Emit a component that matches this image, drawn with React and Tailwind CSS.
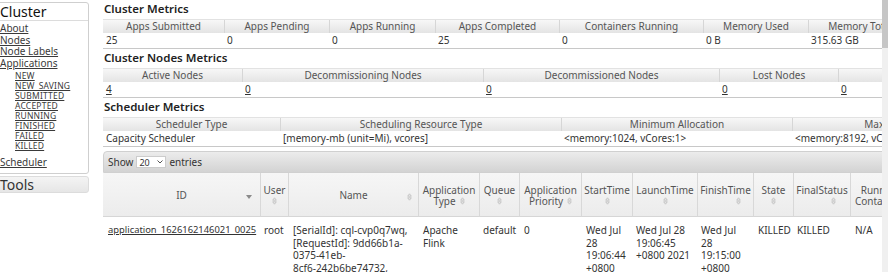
import React from 'react';

const hdr = 'bg-gradient-to-b from-[#f7f7f7] to-[#e4e4e4] text-[#555] text-center border-l border-[#d6d6d6] first:border-l-0 h-[13px] leading-[13px] whitespace-nowrap overflow-hidden';
const cell = 'h-[15px] leading-[14px] pl-[3px] text-[#333] whitespace-nowrap overflow-hidden';

function SortIcon({ className = '' }) {
  return (
    <svg width="5" height="8" viewBox="0 0 5 8" className={className}>
      <path d="M2.5 0.8 L4.3 3.2 H0.7 Z" fill="none" stroke="#b5b5b5" strokeWidth="0.7" />
      <path d="M2.5 7.2 L4.3 4.8 H0.7 Z" fill="none" stroke="#b5b5b5" strokeWidth="0.7" />
    </svg>
  );
}

function Metrics({ title, cols, heads, values, links }) {
  return (
    <div>
      <h3 className="h-[19px] leading-[17px] text-[11.5px] font-semibold text-[#222] pl-[1px]">{title}</h3>
      <div className={`grid ${cols} border-t border-[#e2e2e2]`}>
        {heads.map((h) => (
          <div key={h} className={hdr}>{h}</div>
        ))}
      </div>
      <div className={`grid ${cols} border-b border-[#c8c8c8]`}>
        {values.map((v, i) => (
          <div key={i} className={cell}>
            {links ? <span className="underline">{v}</span> : v}
          </div>
        ))}
      </div>
    </div>
  );
}

const sideLinks = ['About', 'Nodes', 'Node Labels', 'Applications'];
const appStates = ['NEW', 'NEW_SAVING', 'SUBMITTED', 'ACCEPTED', 'RUNNING', 'FINISHED', 'FAILED', 'KILLED'];

// l1/l2: header lines; icon: where the sort icon sits
const appHeads = [
  { l1: 'ID', icon: 'desc' },
  { l1: 'User', l2: '' },
  { l1: 'Name', icon: 'right' },
  { l1: 'Application', l2: 'Type', icon: 'after' },
  { l1: 'Queue', l2: '' },
  { l1: 'Application', l2: 'Priority', icon: 'after' },
  { l1: 'StartTime', l2: '' },
  { l1: 'LaunchTime', l2: '' },
  { l1: 'FinishTime', l2: '', shift: 'ml-[26px]' },
  { l1: 'State', l2: '' },
  { l1: 'FinalStatus', l2: '', shift: 'ml-[22px]' },
  { l1: 'Running', l2: 'Containers', icon: 'none' },
];

const td = 'pt-[7px] leading-[12.7px] text-[#333] whitespace-nowrap overflow-hidden';

export default function App() {
  return (
    <div className="w-[888px] h-[272px] overflow-hidden flex bg-white font-['Noto_Sans',sans-serif] text-[10px]">
      <div className="flex-1 flex overflow-hidden">
        {/* Sidebar */}
        <div className="w-[93px] shrink-0 -ml-[4px] pt-[2px]">
          <div className="border border-[#cfcfcf] rounded-[3px] h-[172px]">
            <div className="h-[18px] leading-[17px] border-b border-[#dcdcdc] text-[14px] text-[#111] pl-[3px]">Cluster</div>
            <ul className="pl-[3px] pt-[2px] text-[#3a3a3a] leading-[11.5px] text-[10px]">
              {sideLinks.map((l) => (
                <li key={l}><span className="underline">{l}</span></li>
              ))}
            </ul>
            <ul className="pl-[18px] mt-[2px] leading-[10px] text-[8.5px] tracking-[0.2px] text-[#3a3a3a]">
              {appStates.map((s) => (
                <li key={s} className="h-[10px]"><span className="underline">{s}</span></li>
              ))}
            </ul>
            <div className="pl-[3px] mt-[6px] leading-[11.5px] text-[#3a3a3a]"><span className="underline">Scheduler</span></div>
          </div>
          <div className="mt-[2px] h-[17px] leading-[16px] border border-[#dcdcdc] rounded-[3px] bg-gradient-to-b from-[#f4f4f4] to-[#e6e6e6] text-[14px] text-[#333] pl-[3px]">Tools</div>
        </div>

        {/* Main */}
        <div className="ml-[14px] w-[1000px] shrink-0">
          <Metrics
            title="Cluster Metrics"
            cols="grid-cols-[121px_105px_106px_124px_144px_105px_104px_120px]"
            heads={['Apps Submitted', 'Apps Pending', 'Apps Running', 'Apps Completed', 'Containers Running', 'Memory Used', 'Memory Total', 'Memory Reserved']}
            values={['25', '0', '0', '25', '0', '0 B', '315.63 GB', '0 B']}
          />
          <Metrics
            title="Cluster Nodes Metrics"
            cols="grid-cols-[139px_241px_236px_119px_200px]"
            heads={['Active Nodes', 'Decommissioning Nodes', 'Decommissioned Nodes', 'Lost Nodes', 'Unhealthy Nodes']}
            values={['4', '0', '0', '0', '0']}
            links
          />
          <Metrics
            title="Scheduler Metrics"
            cols="grid-cols-[177px_281px_231px_240px]"
            heads={['Scheduler Type', 'Scheduling Resource Type', 'Minimum Allocation', 'Maximum Allocation']}
            values={['Capacity Scheduler', '[memory-mb (unit=Mi), vcores]', '<memory:1024, vCores:1>', '<memory:8192, vCores:4>']}
          />

          {/* Datatable toolbar */}
          <div className="mt-[4px] h-[22px] rounded-tl-[4px] bg-gradient-to-b from-[#ececec] to-[#d3d3d3] border border-[#d0d0d0] flex items-center pl-[4px] gap-[3px] text-[#333]">
            <span>Show</span>
            <span className="w-[30px] h-[12px] bg-white border border-[#ccc] flex items-center justify-between px-[2px] text-[9px] leading-none">
              20
              <svg width="6" height="4" viewBox="0 0 6 4"><path d="M0.5 0.5 L3 3 L5.5 0.5" fill="none" stroke="#555" strokeWidth="1" /></svg>
            </span>
            <span>entries</span>
          </div>

          {/* Applications table */}
          <div className="grid grid-cols-[157px_28px_130px_61px_40px_62px_51px_65px_56px_40px_57px_60px_100px]">
            {appHeads.map((h, i) => (
              <div
                key={i}
                className={`h-[44px] pt-[2px] bg-gradient-to-b from-[#f6f6f6] to-[#ececec] border-b border-[#d6d6d6] ${i > 0 ? 'border-l border-l-[#d8d8d8]' : ''} text-[#555] leading-[11px] relative flex flex-col items-center justify-center text-center overflow-hidden whitespace-nowrap`}
              >
                <span>{h.l1}</span>
                {h.l2 !== undefined && (
                  <span className="flex items-center gap-[4px] h-[11px]">
                    {h.l2 && <span>{h.l2}</span>}
                    {h.icon !== 'none' && <SortIcon className={h.shift || ''} />}
                  </span>
                )}
                {h.icon === 'desc' && (
                  <svg width="6" height="4" viewBox="0 0 6 4" className="absolute right-[8px] top-[22px]"><path d="M0 0 H6 L3 4 Z" fill="#8a8a8a" /></svg>
                )}
                {h.icon === 'right' && <SortIcon className="absolute right-[6px] top-[20px]" />}
              </div>
            ))}
            <div className="h-[44px] bg-gradient-to-b from-[#f6f6f6] to-[#ececec] border-b border-l border-[#d6d6d6]" />

            <div className={`${td} pl-[5px] text-[9.4px]`}><span className="underline">application_1626162146021_0025</span></div>
            <div className={`${td} pl-[4px]`}>root</div>
            <div className={`${td} pl-[5px]`}>
              [SerialId]: cql-cvp0q7wq,<br />[RequestId]: 9dd66b1a-<br />0375-41eb-<br />8cf6-242b6be74732,
            </div>
            <div className={`${td} pl-[5px]`}>Apache<br />Flink</div>
            <div className={`${td} pl-[4px]`}>default</div>
            <div className={`${td} pl-[5px]`}>0</div>
            <div className={`${td} pl-[5px]`}>Wed Jul<br />28<br />19:06:44<br />+0800</div>
            <div className={`${td} pl-[4px]`}>Wed Jul 28<br />19:06:45<br />+0800 2021</div>
            <div className={`${td} pl-[4px]`}>Wed Jul<br />28<br />19:15:00<br />+0800</div>
            <div className={`${td} pl-[5px]`}>KILLED</div>
            <div className={`${td} pl-[4px]`}>KILLED</div>
            <div className={`${td} pl-[5px]`}>N/A</div>
            <div />
          </div>
        </div>
      </div>

      {/* Scrollbar */}
      <div className="w-[6px] shrink-0 bg-[#f0f0f0] flex flex-col">
        <div className="h-[48px] bg-[#c6c6c6]" />
      </div>
    </div>
  );
}
